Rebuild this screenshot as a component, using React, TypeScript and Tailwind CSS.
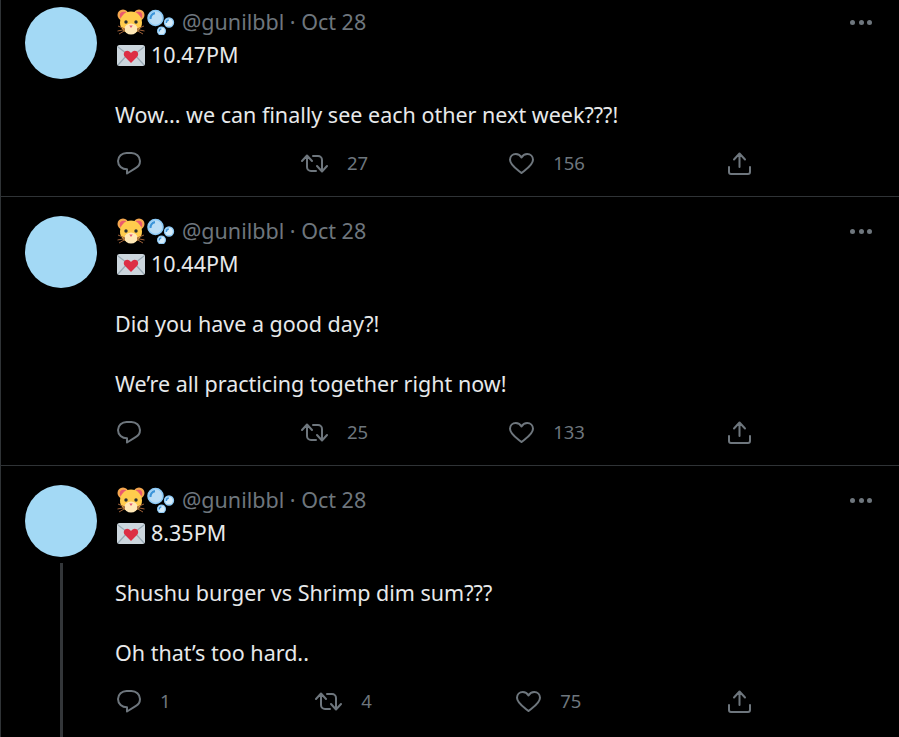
function Hamster() {
  return (
    <svg width="28" height="26" viewBox="0 0 28 26" className="shrink-0">
      <circle cx="6" cy="6" r="5.500" fill="#f4a74f" />
      <circle cx="22" cy="6" r="5.500" fill="#f4a74f" />
      <circle cx="6.500" cy="6.500" r="3.700" fill="#ea596e" />
      <circle cx="21.500" cy="6.500" r="3.700" fill="#ea596e" />
      <ellipse cx="14" cy="13.500" rx="11" ry="11" fill="#ffcc4d" />
      <ellipse cx="14" cy="20" rx="6.500" ry="5.500" fill="#ffe8b6" />
      <circle cx="9" cy="13" r="1.700" fill="#292f33" />
      <circle cx="19" cy="13" r="1.700" fill="#292f33" />
      <path d="M12.300 16.500h3.400L14 19z" fill="#e0557a" />
      <path d="M1 17l7 3M.5 22l7.500-1.500M2 25l6-3.500M27 17l-7 3M27.500 22L20 20.500M26 25l-6-3.500" stroke="#a0623a" strokeWidth="1" fill="none" />
    </svg>
  );
}

function Bubbles() {
  return (
    <svg width="28" height="26" viewBox="0 0 28 26" className="shrink-0">
      <circle cx="8.500" cy="9" r="7.500" fill="#bbddf5" stroke="#8ccaf7" strokeWidth="1.600" />
      <path d="M3.600 10a5 5 0 0 1 4.400-5.800" stroke="#3b94d9" strokeWidth="2.200" fill="none" />
      <circle cx="22" cy="13.500" r="4.500" fill="#d4ecfb" stroke="#8ccaf7" strokeWidth="1.300" />
      <path d="M19.300 14a2.800 2.800 0 0 1 2.500-3" stroke="#3b94d9" strokeWidth="1.400" fill="none" />
      <circle cx="14.500" cy="22" r="3.900" fill="#d4ecfb" stroke="#8ccaf7" strokeWidth="1.200" />
      <path d="M12.300 22.500a2.400 2.400 0 0 1 2.100-2.600" stroke="#3b94d9" strokeWidth="1.300" fill="none" />
    </svg>
  );
}

function LoveLetter() {
  return (
    <svg width="28" height="21" viewBox="0 0 28 21" className="shrink-0">
      <rect width="28" height="21" rx="2.500" fill="#ccd6dd" />
      <path d="M1 2l13 10L27 2M1 20l9-10M27 20l-9-10" stroke="#99aab5" strokeWidth="1.200" fill="none" />
      <path d="M14 18 7.800 11.800C5.600 9.200 7.300 5.800 10.200 5.800c1.600 0 3 1 3.800 2.300.8-1.300 2.200-2.300 3.800-2.300 2.900 0 4.600 3.400 2.400 6z" fill="#dd2e44" />
    </svg>
  );
}

function ReplyIcon() {
  return (
    <svg width="24" height="23" viewBox="0 0 24 23" className="shrink-0 fill-none stroke-[#6e767d] stroke-2" strokeLinejoin="round">
      <path d="M9.500 1h5C19 1 23 4.400 23 9c0 3-1.700 5.700-4.400 7.200L10 21.500v-4.200C5 17.300 1 13.700 1 9 1 4.400 5 1 9.500 1z" />
    </svg>
  );
}

function RetweetIcon() {
  return (
    <svg width="27" height="19" viewBox="0 0 27 19" className="shrink-0 fill-none stroke-[#6e767d] stroke-2" strokeLinecap="round" strokeLinejoin="round">
      <path d="M1 7l5-5.500L11 7M6 2v11a4 4 0 0 0 4 4h5" />
      <path d="M26 12l-5 5.500L16 12M21 17V6a4 4 0 0 0-4-4h-5" />
    </svg>
  );
}

function HeartIcon() {
  return (
    <svg width="25" height="21" viewBox="0 0 25 21" className="shrink-0 fill-none stroke-[#6e767d] stroke-2" strokeLinejoin="round">
      <path d="M12.500 20C9 17 1 12.500 1 6.800 1 3.500 3.500 1 6.800 1c2.500 0 4.500 1.400 5.700 3.500C13.700 2.400 15.700 1 18.200 1 21.500 1 24 3.500 24 6.800 24 12.500 16 17 12.500 20z" />
    </svg>
  );
}

function ShareIcon() {
  return (
    <svg width="23" height="23" viewBox="0 0 23 23" className="shrink-0 fill-none stroke-[#6e767d] stroke-2" strokeLinecap="round" strokeLinejoin="round">
      <path d="M11.500 15V2M6 7.500l5.500-6 5.500 6M1 15v5c0 1 1 2 2 2h17c1 0 2-1 2-2v-5" />
    </svg>
  );
}

type Tweet = {
  time: string;
  lines: string[];
  reply?: string;
  retweet: string;
  like: string;
  thread?: boolean;
};

const tweets: Tweet[] = [
  { time: "10.47PM", lines: ["Wow... we can finally see each other next week???!"], retweet: "27", like: "156" },
  { time: "10.44PM", lines: ["Did you have a good day?!", "We’re all practicing together right now!"], retweet: "25", like: "133" },
  { time: "8.35PM", lines: ["Shushu burger vs Shrimp dim sum???", "Oh that’s too hard.."], reply: "1", retweet: "4", like: "75", thread: true },
];

function Action({ icon, count }: { icon: React.ReactNode; count?: string }) {
  return (
    <div className="flex items-center gap-[19px]">
      {icon}
      <span className="text-[18.500px] text-[#6e767d]">{count}</span>
    </div>
  );
}

function TweetRow({ tweet }: { tweet: Tweet }) {
  return (
    <article className={`flex gap-[18px] pl-6 pt-[19px] ${tweet.thread ? "" : "border-b border-[#2f3336] pb-[18px]"}`}>
      <div className="flex w-[72px] shrink-0 flex-col items-center">
        <div className="h-[72px] w-[72px] rounded-full bg-[#a3d9f5]" />
        {tweet.thread && <div className="mt-1.5 h-[200px] w-[3px] bg-[#333639]" />}
      </div>
      <div className="min-w-0 flex-1">
        <div className="flex h-[30px] items-center">
          <div className="ml-0.5 flex shrink-0 gap-[2px]">
            <Hamster />
            <Bubbles />
          </div>
          <span className="ml-[7px] text-[#6e767d]">@gunilbbl · Oct 28</span>
          <div className="ml-auto mr-[27px] flex gap-[3.300px]">
            <span className="h-[5px] w-[5px] rounded-full bg-[#6e767d]" />
            <span className="h-[5px] w-[5px] rounded-full bg-[#6e767d]" />
            <span className="h-[5px] w-[5px] rounded-full bg-[#6e767d]" />
          </div>
        </div>
        <div className="mt-[3px] flex h-[30px] items-center text-[#e7e9ea]">
          <div className="ml-0.5 mr-[6px]"><LoveLetter /></div>
          <span>{tweet.time}</span>
        </div>
        <div className="mt-[30px] flex flex-col gap-[30px] text-[#e7e9ea]">
          {tweet.lines.map((line) => (
            <p key={line} className="h-[30px]">{line}</p>
          ))}
        </div>
        <div className="ml-0.5 mt-[18px] flex h-[30px] w-[634px] items-center justify-between">
          <Action icon={<ReplyIcon />} count={tweet.reply} />
          <Action icon={<RetweetIcon />} count={tweet.retweet} />
          <div className="pr-[2px]">
            <Action icon={<HeartIcon />} count={tweet.like} />
          </div>
          <ShareIcon />
        </div>
      </div>
    </article>
  );
}

export default function App() {
  return (
    <main className="h-[737px] w-[899px] overflow-hidden border-l border-[#2f3336] bg-black font-['Noto_Sans','Liberation_Sans',sans-serif] text-[21.500px] leading-[30px]">
      <div className="-mt-3">
        {tweets.map((t) => (
          <TweetRow key={t.time} tweet={t} />
        ))}
      </div>
    </main>
  );
}
